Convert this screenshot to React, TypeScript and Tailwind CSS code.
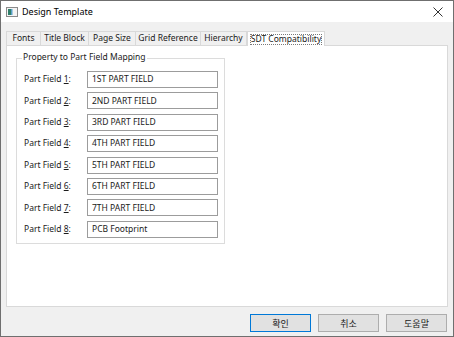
import React from "react";

const font = { fontFamily: '"Noto Sans", "Noto Sans CJK KR", sans-serif' };

const tabs = [
  { label: "Fonts", w: 35 },
  { label: "Title Block", w: 48 },
  { label: "Page Size", w: 47 },
  { label: "Grid Reference", w: 65 },
  { label: "Hierarchy", w: 46 },
];

const fields = [
  "1ST PART FIELD",
  "2ND PART FIELD",
  "3RD PART FIELD",
  "4TH PART FIELD",
  "5TH PART FIELD",
  "6TH PART FIELD",
  "7TH PART FIELD",
  "PCB Footprint",
];

export default function App() {
  return (
    <div
      className="w-[454px] h-[337px] border border-[#6f6f6f] bg-[#f0f0f0] flex flex-col text-[8.5px] text-[#1a1a1a] overflow-hidden whitespace-nowrap"
      style={font}
    >
      {/* Title bar */}
      <div className="h-[21px] bg-white flex items-center pl-[5px] pr-[10px] shrink-0">
        <svg width="12" height="10" viewBox="0 0 12 10" className="mt-[1px]">
          <rect x="0.5" y="0.5" width="11" height="9" fill="#f4f4f4" stroke="#8a8a8a" />
          <rect x="2" y="2" width="3" height="6" fill="#2f7f6a" />
          <rect x="5" y="2" width="1.5" height="6" fill="#5aa0c8" />
        </svg>
        <span className="ml-[4px] text-[9px] leading-none text-black">Design Template</span>
        <div className="flex-1" />
        <svg width="10" height="10" viewBox="0 0 10 10">
          <path d="M0.5 0.5 L9.5 9.5 M9.5 0.5 L0.5 9.5" stroke="#333" strokeWidth="1" />
        </svg>
      </div>

      {/* Tabs */}
      <div className="flex items-end h-[15px] mt-[8px] pl-[5px] shrink-0">
        {tabs.map((t, i) => (
          <div
            key={t.label}
            className={`h-[14px] flex items-center justify-center border-t border-r border-[#d9d9d9] bg-[#f0f0f0] leading-none ${
              i === 0 ? "border-l" : ""
            }`}
            style={{ width: t.w }}
          >
            {t.label}
          </div>
        ))}
        <div className="h-[15px] w-[78px] -mb-px relative z-10 bg-white border-t border-l border-r border-[#d9d9d9] flex items-start justify-center pt-[2px]">
          <div className="h-[11px] w-[72px] border border-dotted border-[#7a7a7a] flex items-center justify-center leading-none">
            SDT Compatibility
          </div>
        </div>
      </div>

      {/* Panel */}
      <div className="mx-[5px] h-[262px] bg-white border border-[#d9d9d9] shrink-0 pt-[12px] pl-[9px]">
        <div className="relative w-[209px] border border-[#dcdcdc] pt-[12px] pb-[5px] pl-[7px]">
          <div className="absolute -top-[6px] left-[5px] bg-white px-[1px] leading-none">
            Property to Part Field Mapping
          </div>
          <div className="flex flex-col gap-[4.4px]">
            {fields.map((f, i) => (
              <div key={f} className="flex items-center h-[17px]">
                <div className="w-[63px] leading-none">
                  Part Field <span className="underline">{i + 1}</span>:
                </div>
                <div className="w-[131px] h-[17px] border border-[#9c9c9c] flex items-center pl-[4px] leading-none">
                  {f}
                </div>
              </div>
            ))}
          </div>
        </div>
      </div>

      {/* Buttons */}
      <div className="flex justify-end gap-[7px] pr-[6px] mt-[7px]">
        <div className="w-[61px] h-[18px] bg-[#e1e1e1] border border-[#0078d7] flex items-center justify-center leading-none text-[9px]">
          확인
        </div>
        <div className="w-[61px] h-[18px] bg-[#e1e1e1] border border-[#adadad] flex items-center justify-center leading-none text-[9px]">
          취소
        </div>
        <div className="w-[61px] h-[18px] bg-[#e1e1e1] border border-[#adadad] flex items-center justify-center leading-none text-[9px]">
          도움말
        </div>
      </div>
    </div>
  );
}
